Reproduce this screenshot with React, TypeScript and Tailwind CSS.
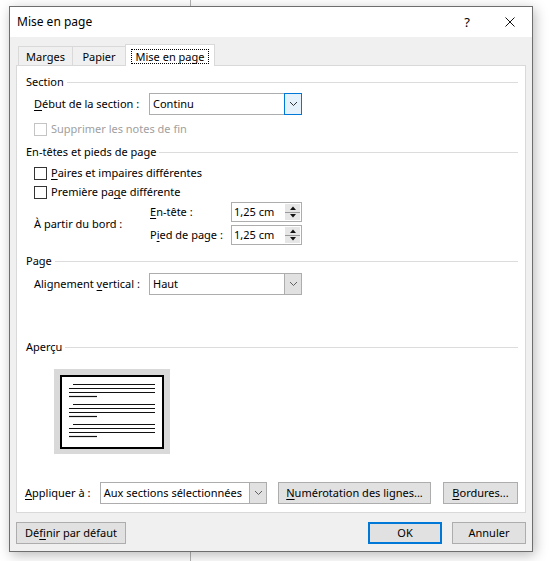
import type { ReactNode } from "react";

function Ul({ children }: { children: ReactNode }) {
  return <span className="underline decoration-1 underline-offset-[2px]">{children}</span>;
}

function Group({ title, className = "" }: { title: string; className?: string }) {
  return (
    <div className={`flex h-4 items-center ${className}`}>
      <span>{title}</span>
      <div className="ml-[3px] h-px flex-1 bg-[#dcdcdc]" />
    </div>
  );
}

function Chevron({ color = "#333333" }: { color?: string }) {
  return (
    <svg width="9" height="6" viewBox="0 0 9 6">
      <path d="M1 1 L4.5 4.5 L8 1" fill="none" stroke={color} strokeWidth="1" />
    </svg>
  );
}

function Combo({ value, width, hot }: { value: string; width: string; hot?: boolean }) {
  return (
    <div className={`flex h-[22px] ${width} items-stretch border border-[#adadad] bg-white`}>
      <span className="flex-1 pl-[3px] leading-[20px]">{value}</span>
      {hot ? (
        <div className="-my-px -mr-px flex w-[18px] items-center justify-center border border-[#0078d7] bg-[#e5f1fb]">
          <Chevron />
        </div>
      ) : (
        <div className="flex w-[17px] items-center justify-center border-l border-[#adadad] bg-[#e1e1e1]">
          <Chevron color="#606060" />
        </div>
      )}
    </div>
  );
}

function Spin({ value }: { value: string }) {
  return (
    <div className="flex h-[20px] w-[71px] items-stretch border border-[#adadad] bg-white">
      <span className="flex-1 pl-[2px] leading-[18px]">{value}</span>
      <div className="my-px mr-px flex w-[15px] flex-col bg-[#e6e6e6]">
        <div className="flex flex-1 items-center justify-center">
          <svg width="6" height="4" viewBox="0 0 6 4">
            <polygon points="0,4 3,0.5 6,4" fill="#111" />
          </svg>
        </div>
        <div className="h-px bg-[#9a9a9a]" />
        <div className="flex flex-1 items-center justify-center">
          <svg width="6" height="4" viewBox="0 0 6 4">
            <polygon points="0,0 3,3.5 6,0" fill="#111" />
          </svg>
        </div>
      </div>
    </div>
  );
}

function Check({ disabled }: { disabled?: boolean }) {
  return (
    <span
      className={`h-[13px] w-[13px] shrink-0 border bg-white ${disabled ? "border-[#c4c4c4]" : "border-[#333333]"}`}
    />
  );
}

function Btn({ children, width, primary }: { children: ReactNode; width: string; primary?: boolean }) {
  return (
    <div
      className={`flex h-[22px] ${width} items-center justify-center bg-[#e1e1e1] ${
        primary ? "border-2 border-[#0078d7]" : "border border-[#adadad]"
      }`}
    >
      {children}
    </div>
  );
}

function Preview() {
  const groups = [15, 35, 55];
  return (
    <svg width="116" height="85" viewBox="0 0 116 85" className="ml-[28px] mt-[14px] block">
      <rect x="0" y="0" width="116" height="85" fill="#d9d9d9" />
      <rect x="7" y="7" width="102" height="72" fill="#fff" stroke="#000" strokeWidth="2" />
      {groups.map((g) => (
        <g key={g} stroke="#111" strokeWidth="1.2">
          <line x1="19" x2="101" y1={g + 0.5} y2={g + 0.5} />
          <line x1="15" x2="101" y1={g + 4.5} y2={g + 4.5} />
          <line x1="15" x2="101" y1={g + 8.5} y2={g + 8.5} />
          <line x1="15" x2="43" y1={g + 12.5} y2={g + 12.5} />
        </g>
      ))}
    </svg>
  );
}

export default function App() {
  return (
    <div className="relative h-[561px] w-[549px] overflow-hidden bg-white pl-[9px] pt-[6px] font-['Noto_Sans',sans-serif] text-[11px] leading-4 text-black">
      {/* window behind */}
      <div className="absolute left-[190px] top-0 h-full w-px bg-[#b4b4b4]" />

      <div className="relative flex h-[546px] w-[524px] flex-col border border-[#6e6e6e] bg-[#f0f0f0] shadow-[2px_3px_12px_rgba(0,0,0,0.28)]">
        {/* title bar */}
        <div className="flex h-[30px] items-center bg-white pl-[7px]">
          <span className="text-[12px]">Mise en page</span>
          <div className="flex-1" />
          <span className="mr-[35px] text-[13px]">?</span>
          <svg width="10" height="10" viewBox="0 0 10 10" className="mr-[17px]">
            <path d="M0.5 0.5 L9.5 9.5 M9.5 0.5 L0.5 9.5" stroke="#111" strokeWidth="1" />
          </svg>
        </div>

        {/* tabs */}
        <div className="relative z-10 -mb-px mt-[7px] flex items-end pl-[8px]">
          <div className="flex h-[20px] w-[55px] justify-center border border-[#d9d9d9] bg-[#f0f0f0] pt-[2px]">Marges</div>
          <div className="-ml-px flex h-[20px] w-[54px] justify-center border border-[#d9d9d9] bg-[#f0f0f0] pt-[2px]">Papier</div>
          <div className="-ml-px flex h-[22px] w-[90px] justify-center border border-b-0 border-[#d9d9d9] bg-white pt-[4px]">
            <span className="h-[15px] border border-dotted border-black px-[4px] leading-[13px]">Mise en page</span>
          </div>
        </div>

        {/* panel */}
        <div className="mx-[6px] h-[448px] border border-[#d9d9d9] bg-white">
          <div className="flex flex-col pl-[9px] pr-[7px] pt-[8px]">
            <Group title="Section" />
            <div className="mt-[3px] flex h-[22px] items-center pl-[8px]">
              <span className="w-[115px]">
                <Ul>D</Ul>ébut de la section :
              </span>
              <Combo value="Continu" width="w-[153px]" hot />
            </div>
            <div className="mt-[6px] flex h-4 items-center gap-[4px] pl-[8px] text-[#a0a0a0]">
              <Check disabled />
              <span>Supprimer les notes de fin</span>
            </div>

            <Group title="En-têtes et pieds de page" className="mt-[7px]" />
            <div className="mt-[5px] flex h-4 items-center gap-[4px] pl-[8px]">
              <Check />
              <span>
                <Ul>P</Ul>aires et impaires différentes
              </span>
            </div>
            <div className="mt-[3px] flex h-4 items-center gap-[4px] pl-[8px]">
              <Check />
              <span>
                Première pa<Ul>g</Ul>e différente
              </span>
            </div>
            <div className="mt-[2px] flex items-center pl-[8px]">
              <span className="w-[115px] pt-[1px]">À partir du bord :</span>
              <div className="flex flex-col gap-[3px]">
                <div className="flex items-center">
                  <span className="w-[82px] pl-px">
                    <Ul>E</Ul>n-tête :
                  </span>
                  <Spin value="1,25 cm" />
                </div>
                <div className="flex items-center">
                  <span className="w-[82px] pl-px">
                    P<Ul>i</Ul>ed de page :
                  </span>
                  <Spin value="1,25 cm" />
                </div>
              </div>
            </div>

            <Group title="Page" className="mt-[8px]" />
            <div className="mt-[4px] flex h-[22px] items-center pl-[8px]">
              <span className="w-[115px]">
                Alignement <Ul>v</Ul>ertical :
              </span>
              <Combo value="Haut" width="w-[153px]" />
            </div>

            <Group title="Aperçu" className="mt-[44px]" />
            <Preview />

            <div className="-ml-px mt-[28px] flex h-[21px] items-center">
              <span className="w-[76px]">
                <Ul>A</Ul>ppliquer à :
              </span>
              <Combo value="Aux sections sélectionnées" width="w-[170px] h-[21px]" />
              <div className="ml-[11px]">
                <Btn width="w-[153px]">
                  <span>
                    <Ul>N</Ul>umérotation des lignes...
                  </span>
                </Btn>
              </div>
              <div className="ml-[12px]">
                <Btn width="w-[75px]">
                  <span>
                    <Ul>B</Ul>ordures...
                  </span>
                </Btn>
              </div>
            </div>
          </div>
        </div>

        {/* bottom buttons */}
        <div className="mt-[9px] flex px-[6px]">
          <Btn width="w-[110px]">
            <span>
              Dé<Ul>f</Ul>inir par défaut
            </span>
          </Btn>
          <div className="flex-1" />
          <Btn width="w-[74px]" primary>
            OK
          </Btn>
          <div className="ml-[10px]">
            <Btn width="w-[74px]">Annuler</Btn>
          </div>
        </div>
      </div>
    </div>
  );
}
